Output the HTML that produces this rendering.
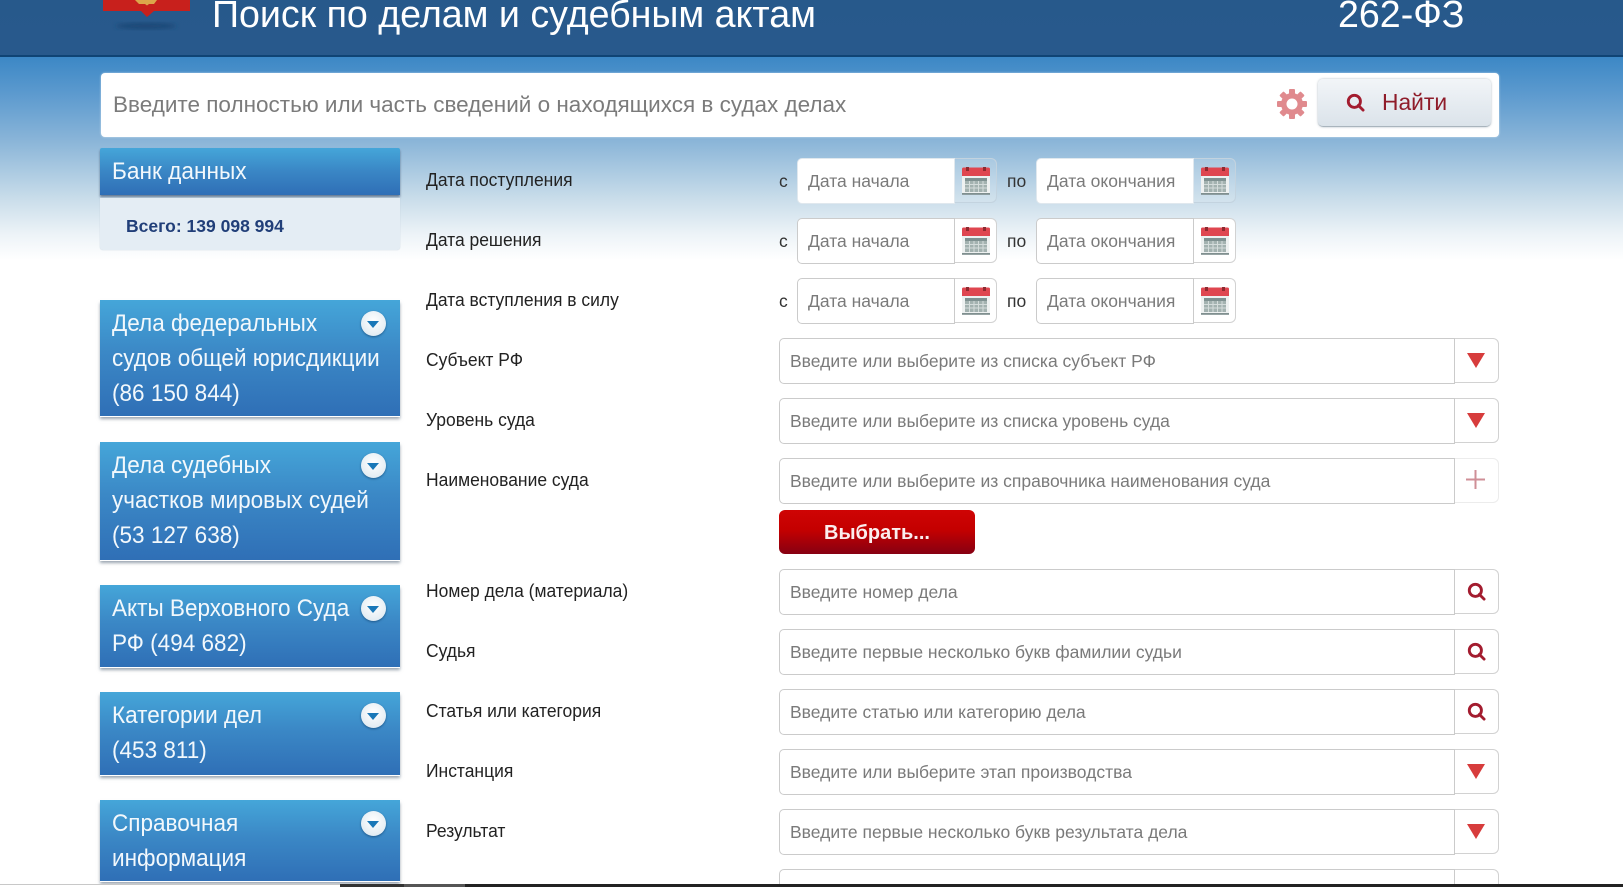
<!DOCTYPE html>
<html lang="ru"><head><meta charset="utf-8"><title>Поиск по делам и судебным актам</title>
<style>
html,body{margin:0;padding:0;width:1623px;height:887px;overflow:hidden}
body{font-family:"Liberation Sans",Arial,sans-serif;background:#fff}
#root{position:absolute;left:0;top:0;width:1623px;height:887px;overflow:hidden;background:#fff}
.a{position:absolute}
#bg{left:0;top:56px;width:1623px;height:204px;background:linear-gradient(#3b87c5 0,#5e9bcf 40px,#8ab5d8 85px,#c6dbe9 140px,#eef4f8 180px,#fff 204px)}
#hd{left:0;top:0;width:1623px;height:55px;background:linear-gradient(#27598b,#28598c);border-bottom:2px solid #0f4475;box-sizing:content-box}
.t{color:#fff;font-size:37.6px;line-height:42px;top:-7px;white-space:nowrap}
#sb{left:101px;top:73px;width:1398px;height:64px;background:#fff;border-radius:4px;box-shadow:0 0 2px rgba(255,255,255,.6)}
#ph{left:113px;top:90px;font-size:22.5px;line-height:30px;color:#7b7b7b;white-space:nowrap}
#find{left:1318px;top:79px;width:173px;height:47px;border-radius:5px;background:linear-gradient(#f2f5f8,#dbe3ea);border-bottom:1px solid #a9b4bd;box-shadow:0 0 2px rgba(100,120,140,.5)}
#findt{left:1382px;top:87px;font-size:22.8px;line-height:30px;color:#8f1c2a}
.hb{left:100px;width:300px;background:linear-gradient(#45a6d9 0,#3b88c6 45%,#2f6fb6 100%);color:#f2f8fc;font-size:23.6px;line-height:35px;box-shadow:0 1px 0 #fff,0 3px 3px rgba(70,90,110,.55)}
.hb div{position:absolute;left:12px;top:7px;white-space:nowrap;transform:scaleX(.955);transform-origin:0 0}
.c{position:absolute;left:261px;top:11px;width:25px;height:25px;border-radius:50%;background:radial-gradient(circle at 50% 40%,#fff,#e4edf3 70%,#c9d8e3);box-shadow:0 1px 2px rgba(0,40,80,.5)}
.c:after{content:"";position:absolute;left:6px;top:10px;border-left:6.5px solid transparent;border-right:6.5px solid transparent;border-top:7px solid #1a78b8}
.l{left:426px;font-size:18px;line-height:24px;color:#222;white-space:nowrap;transform:scaleX(.97);transform-origin:0 50%}
.s{font-size:17.5px;line-height:24px;color:#333}
.i{box-sizing:border-box;height:46px;background:#fff;border:1px solid #cbcbcb;border-radius:5px 0 0 5px;color:#7a7a7a;font-size:17.500px;line-height:44px;padding-left:10px;white-space:nowrap}
.b{box-sizing:border-box;height:45px;width:44px;border:1px solid #d2d2d2;border-left:0;border-radius:0 6px 6px 0;background:#fff}
.d{width:42px}
.b svg{position:absolute}
.tri{position:absolute;left:12px;top:14px;width:0;height:0;border-left:9px solid transparent;border-right:9px solid transparent;border-top:15px solid #d73c3c}
.nb{background:rgba(255,255,255,.12);border-color:#c3d3df}
.lg{left:779px;width:676px}
.bt{left:1455px}
</style></head><body><div id="root">
<svg width="0" height="0" style="position:absolute"><defs>
<symbol id="cal" viewBox="0 0 28 28"><rect x="0" y="0.500" width="28" height="27" rx="1.500" fill="#eef1f1"/><path d="M0 9V2a1.500 1.500 0 0 1 1.500-1.500h25A1.500 1.500 0 0 1 28 2v7z" fill="#df4650"/><rect x="4" y="0" width="3" height="4" fill="#8f2a30"/><rect x="21" y="0" width="3" height="4" fill="#8f2a30"/><rect x="3" y="11" width="22" height="3" fill="#7f9191"/><rect x="3" y="14" width="22" height="11" fill="#a3b2b0"/><path d="M3 17.500h22M3 21h22M7.500 14v11M12 14v11M16.500 14v11M21 14v11" stroke="#d4dcdb" stroke-width="1" fill="none"/><rect x="0" y="26" width="28" height="1.800" fill="#7f8f8f"/></symbol>
<symbol id="mag" viewBox="0 0 20 20"><circle cx="8.800" cy="8.800" r="6.400" fill="none" stroke="#a31c2f" stroke-width="3"/><path d="M13 13l5 5" stroke="#a31c2f" stroke-width="3" stroke-linecap="round"/></symbol>
<filter id="bl"><feGaussianBlur stdDeviation="2"/></filter>
</defs></svg>

<div id="bg" class="a"></div>
<div id="hd" class="a"></div>
<svg class="a" style="left:100px;top:0" width="95" height="34" viewBox="0 0 95 34"><ellipse cx="46" cy="26" rx="30" ry="3.500" fill="#1d4a78" filter="url(#bl)"/><path d="M3 0h87v11H54l-7 6-6-6H3z" fill="#c8201c"/><path d="M35 0h22l-3 4h-5l-2 1.500-2-1.500h-6z" fill="#dca64a"/></svg>
<div class="a t" style="left:212px">Поиск по делам и судебным актам</div>
<div class="a t" style="left:1338px">262-ФЗ</div>

<div id="sb" class="a"></div>
<div id="ph" class="a">Введите полностью или часть сведений о находящихся в судах делах</div>
<svg class="a" style="left:1277px;top:89px" width="30" height="30" viewBox="0 0 30 30"><g fill="#e08a8e"><circle cx="15" cy="15" r="11"/><rect x="12" y="0" width="6" height="6" rx="1"/><rect x="12" y="24" width="6" height="6" rx="1"/><rect x="12" y="0" width="6" height="6" rx="1" transform="rotate(45 15 15)"/><rect x="12" y="24" width="6" height="6" rx="1" transform="rotate(45 15 15)"/><rect x="12" y="0" width="6" height="6" rx="1" transform="rotate(90 15 15)"/><rect x="12" y="24" width="6" height="6" rx="1" transform="rotate(90 15 15)"/><rect x="12" y="0" width="6" height="6" rx="1" transform="rotate(135 15 15)"/><rect x="12" y="24" width="6" height="6" rx="1" transform="rotate(135 15 15)"/></g><circle cx="15" cy="15" r="5.500" fill="#fff"/></svg>
<div id="find" class="a"></div>
<svg class="a" style="left:1346px;top:93px" width="19" height="19"><use href="#mag"/></svg>
<div id="findt" class="a">Найти</div>

<div class="a" style="left:100px;top:148px;width:300px;height:47px;background:linear-gradient(#45a6d9,#3a86c5 50%,#2f6fb6);border-radius:2px 2px 0 0;box-shadow:0 2px 2px rgba(60,80,110,.7)"></div>
<div class="a" style="left:112px;top:155px;color:#f2f8fc;font-size:23.6px;line-height:35px;transform:scaleX(.96);transform-origin:0 0">Банк данных</div>
<div class="a" style="left:100px;top:198px;width:300px;height:52px;background:#e4edf4;border-radius:0 0 3px 3px;box-shadow:0 0 1px #b9c9d6"></div>
<div class="a" style="left:126px;top:214px;color:#213f79;font-size:17.500px;line-height:24px;font-weight:bold;white-space:nowrap">Всего: 139 098 994</div>

<div class="a hb" style="top:300px;height:116px"><div>Дела федеральных<br>судов общей юрисдикции<br>(86 150 844)</div><span class="c"></span></div>
<div class="a hb" style="top:442px;height:118px"><div>Дела судебных<br>участков мировых судей<br>(53 127 638)</div><span class="c"></span></div>
<div class="a hb" style="top:585px;height:82px"><div>Акты Верховного Суда<br>РФ (494 682)</div><span class="c"></span></div>
<div class="a hb" style="top:692px;height:83px"><div>Категории дел<br>(453 811)</div><span class="c"></span></div>
<div class="a hb" style="top:800px;height:81px"><div>Справочная<br>информация</div><span class="c"></span></div>

<div class="a l" style="top:168px">Дата поступления</div>
<div class="a l" style="top:228px">Дата решения</div>
<div class="a l" style="top:288px">Дата вступления в силу</div>
<div class="a l" style="top:348px">Субъект РФ</div>
<div class="a l" style="top:408px">Уровень суда</div>
<div class="a l" style="top:468px">Наименование суда</div>
<div class="a l" style="top:579px">Номер дела (материала)</div>
<div class="a l" style="top:639px">Судья</div>
<div class="a l" style="top:699px">Статья или категория</div>
<div class="a l" style="top:759px">Инстанция</div>
<div class="a l" style="top:819px">Результат</div>

<div class="a s" style="left:779px;top:169px">с</div><div class="a i" style="left:797px;top:158px;width:158px;border-color:#e0e8ee">Дата начала</div><div class="a b d nb" style="left:955px;top:158px"><svg style="left:7px;top:8px" width="28" height="28"><use href="#cal"/></svg></div>
<div class="a s" style="left:1007px;top:169px">по</div><div class="a i" style="left:1036px;top:158px;width:158px;border-color:#e0e8ee">Дата окончания</div><div class="a b d nb" style="left:1194px;top:158px"><svg style="left:7px;top:8px" width="28" height="28"><use href="#cal"/></svg></div>

<div class="a s" style="left:779px;top:229px">с</div><div class="a i" style="left:797px;top:218px;width:158px">Дата начала</div><div class="a b d" style="left:955px;top:218px"><svg style="left:7px;top:8px" width="28" height="28"><use href="#cal"/></svg></div>
<div class="a s" style="left:1007px;top:229px">по</div><div class="a i" style="left:1036px;top:218px;width:158px">Дата окончания</div><div class="a b d" style="left:1194px;top:218px"><svg style="left:7px;top:8px" width="28" height="28"><use href="#cal"/></svg></div>

<div class="a s" style="left:779px;top:289px">с</div><div class="a i" style="left:797px;top:278px;width:158px">Дата начала</div><div class="a b d" style="left:955px;top:278px"><svg style="left:7px;top:8px" width="28" height="28"><use href="#cal"/></svg></div>
<div class="a s" style="left:1007px;top:289px">по</div><div class="a i" style="left:1036px;top:278px;width:158px">Дата окончания</div><div class="a b d" style="left:1194px;top:278px"><svg style="left:7px;top:8px" width="28" height="28"><use href="#cal"/></svg></div>

<div class="a i lg" style="top:338px">Введите или выберите из списка субъект РФ</div><div class="a b bt" style="top:338px"><span class="tri"></span></div>
<div class="a i lg" style="top:398px">Введите или выберите из списка уровень суда</div><div class="a b bt" style="top:398px"><span class="tri"></span></div>
<div class="a i lg" style="top:458px">Введите или выберите из справочника наименования суда</div><div class="a b bt" style="top:458px;border-color:#ececec"><svg style="left:11px;top:11px" width="19" height="19"><path d="M0 9.500h19M9.500 0v19" stroke="#cf8f97" stroke-width="2"/></svg></div>
<div class="a" style="left:779px;top:510px;width:196px;height:44px;border-radius:6px;background:linear-gradient(#cf0404,#c40000 45%,#860012);color:#fbeeee;font-size:20px;font-weight:bold;line-height:46px;text-align:center">Выбрать...</div>
<div class="a i lg" style="top:569px">Введите номер дела</div><div class="a b bt" style="top:569px"><svg style="left:12px;top:12px" width="19" height="19"><use href="#mag"/></svg></div>
<div class="a i lg" style="top:629px">Введите первые несколько букв фамилии судьи</div><div class="a b bt" style="top:629px"><svg style="left:12px;top:12px" width="19" height="19"><use href="#mag"/></svg></div>
<div class="a i lg" style="top:689px">Введите статью или категорию дела</div><div class="a b bt" style="top:689px"><svg style="left:12px;top:12px" width="19" height="19"><use href="#mag"/></svg></div>
<div class="a i lg" style="top:749px">Введите или выберите этап производства</div><div class="a b bt" style="top:749px"><span class="tri"></span></div>
<div class="a i lg" style="top:809px">Введите первые несколько букв результата дела</div><div class="a b bt" style="top:809px"><span class="tri"></span></div>
<div class="a i lg" style="top:869px"></div><div class="a b bt" style="top:869px"></div>

<div class="a" style="left:0;top:884px;width:340px;height:3px;background:#fff;border-top:1px solid #c8c8c8;box-sizing:border-box"></div>
<div class="a" style="left:340px;top:884px;width:64px;height:3px;background:#333"></div>
<div class="a" style="left:404px;top:884px;width:61px;height:3px;background:#555"></div>
<div class="a" style="left:465px;top:884px;width:1158px;height:3px;background:#222"></div>
</div></body></html>
